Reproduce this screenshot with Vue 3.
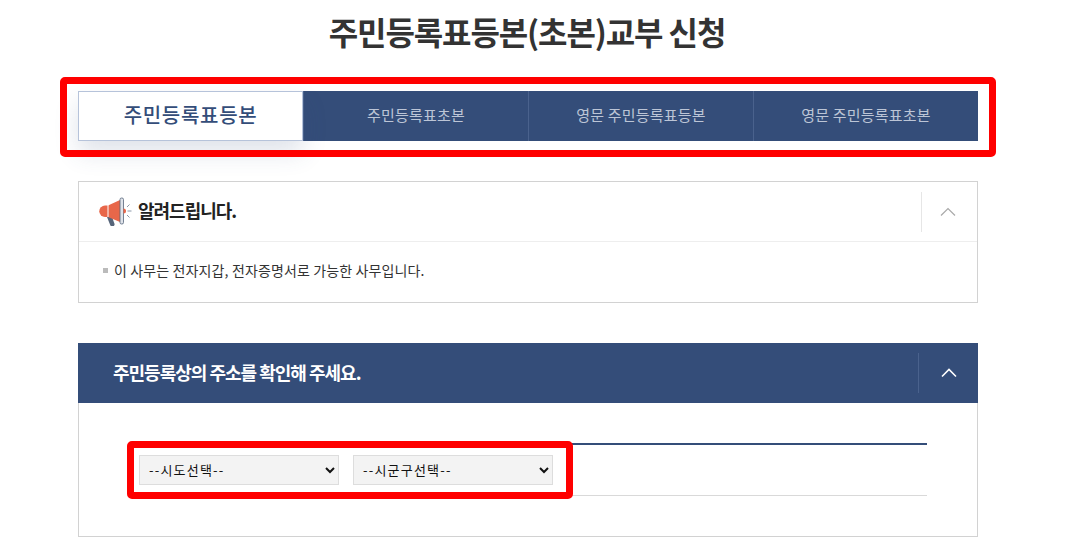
<script setup>
const tabs = ['주민등록표초본', '영문 주민등록표등본', '영문 주민등록표초본']
</script>

<template>
  <div class="page">
    <div class="wrap">
      <h1 class="title">주민등록표등본(초본)교부 신청</h1>

      <div class="tabs-zone">
        <div class="tabs">
          <div class="tab active">주민등록표등본</div>
          <div v-for="t in tabs" :key="t" class="tab">{{ t }}</div>
        </div>
        <div class="mark mark-tabs"></div>
      </div>

      <section class="notice">
        <header class="notice-head">
          <svg class="horn" width="36" height="30" viewBox="0 0 36 30">
            <path d="M10 21l5 0 2.400 6.500a2.200 2.200 0 0 1-4.200 1.500z" fill="#56657a"/>
            <path d="M8 9.500h3v11.500H8a5.700 5.700 0 0 1 0-11.500z" fill="#e8674a"/>
            <path d="M11 9.500l12-5.500v22l-12-5z" fill="#e8674a"/>
            <path d="M11 9v12" stroke="#fff" stroke-width="1"/>
            <rect x="23" y="2" width="3.500" height="26" rx="1.500" fill="#dfe3ea" stroke="#56657a" stroke-width=".8"/>
            <path d="M26.500 12.500a2.500 2.500 0 0 1 0 5z" fill="#e8674a"/>
            <path d="M30.500 15h4M30 11l2.500-2.500M30 19l2.500 2.500" stroke="#8a97a8" stroke-width="1"/>
          </svg>
          <strong class="notice-title">알려드립니다.</strong>
          <div class="toggle">
            <svg width="16" height="10" viewBox="0 0 16 10"><path d="M1 8.500l7-7 7 7" fill="none" stroke="#a9a9a9" stroke-width="1.200"/></svg>
          </div>
        </header>
        <div class="notice-body">
          <span class="bullet"></span>
          <span>이 사무는 전자지갑, 전자증명서로 가능한 사무입니다.</span>
        </div>
      </section>

      <section class="address">
        <header class="address-head">
          <strong class="address-title">주민등록상의 주소를 확인해 주세요.</strong>
          <div class="toggle toggle-dark">
            <svg width="16" height="10" viewBox="0 0 16 10"><path d="M1 8.500l7-7 7 7" fill="none" stroke="#fff" stroke-width="1.600"/></svg>
          </div>
        </header>
        <div class="address-body">
          <div class="field-row">
            <select class="sel"><option>--시도선택--</option></select>
            <select class="sel"><option>--시군구선택--</option></select>
            <div class="mark mark-select"></div>
          </div>
        </div>
      </section>
    </div>
  </div>
</template>

<style scoped>
.page {
  width: 1056px;
  font-family: "Noto Sans CJK KR", "Noto Sans", sans-serif;
  color: #333;
}
.wrap {
  width: 900px;
  margin: 0 auto;
}
.title {
  margin: 0;
  height: 91px;
  padding: 8px 2px 0 0;
  box-sizing: border-box;
  text-align: center;
  font-size: 32px;
  line-height: 46px;
  font-weight: 700;
  letter-spacing: -1.1px;
  color: #333;
}
.tabs-zone {
  position: relative;
}
.tabs {
  display: flex;
  height: 50px;
}
.tab {
  flex: 0 0 225px;
  display: flex;
  align-items: center;
  justify-content: center;
  box-sizing: border-box;
  padding-bottom: 4px;
  background: #344d79;
  color: #bcc5d6;
  font-size: 15px;
  letter-spacing: .2px;
  border-left: 1px solid #4a628d;
}
.tab.active {
  background: #fff;
  color: #344d79;
  font-size: 20px;
  font-weight: 500;
  letter-spacing: .7px;
  border: 1px solid #b6c3da;
  box-shadow: 0 12px 24px rgba(53, 78, 122, .16);
  position: relative;
}
.mark {
  position: absolute;
  box-sizing: border-box;
  border: 7px solid #f00;
  border-radius: 5px;
  pointer-events: none;
}
.mark-tabs {
  left: -18px;
  top: -14px;
  width: 936px;
  height: 80px;
  z-index: 2;
}
.notice {
  margin-top: 40px;
  height: 122px;
  box-sizing: border-box;
  border: 1px solid #d2d2d2;
  background: #fff;
  position: relative;
}
.notice-head {
  height: 60px;
  display: flex;
  align-items: center;
  border-bottom: 1px solid #eee;
  padding-left: 19px;
  box-sizing: border-box;
}
.horn {
  flex: none;
  margin-left: -1px;
  margin-top: -1px;
}
.notice-title {
  margin-left: 5px;
  margin-bottom: 3px;
  font-size: 18px;
  font-weight: 700;
  letter-spacing: -1px;
  color: #222;
}
.toggle {
  margin-left: auto;
  width: 56px;
  height: 40px;
  padding-right: 4px;
  border-left: 1px solid #e6e6e6;
  display: flex;
  align-items: center;
  justify-content: center;
  box-sizing: border-box;
}
.notice-body {
  display: flex;
  align-items: center;
  height: 60px;
  padding: 0 0 4px 24px;
  box-sizing: border-box;
  font-size: 14px;
  letter-spacing: .13px;
  color: #333;
}
.bullet {
  width: 5px;
  height: 5px;
  background: #bbb;
  margin-right: 6px;
}
.address {
  margin-top: 40px;
}
.address-head {
  height: 60px;
  background: #344d79;
  display: flex;
  align-items: center;
  padding-left: 35px;
}
.address-title {
  color: #fff;
  font-size: 18px;
  font-weight: 700;
  letter-spacing: -1px;
  margin-bottom: 3px;
}
.toggle-dark {
  width: 60px;
  padding-right: 0;
  border-left-color: #4a628d;
}
.address-body {
  height: 134px;
  box-sizing: border-box;
  border: 1px solid #d2d2d2;
  border-top: 0;
  padding: 40px 50px 0;
}
.field-row {
  position: relative;
  height: 53px;
  box-sizing: border-box;
  border-top: 2px solid #344d79;
  border-bottom: 1px solid #d9d9d9;
  padding: 10px 10px 0;
  display: flex;
  gap: 14px;
}
.sel {
  width: 200px;
  height: 30px;
  box-sizing: border-box;
  background: #f3f3f3;
  border: 1px solid #ddd;
  border-radius: 0;
  font-family: "Noto Sans CJK KR", sans-serif;
  font-size: 13px;
  letter-spacing: 1.2px;
  padding: 0 0 2px 5px;
  color: #111;
}
.mark-select {
  left: -2px;
  top: -4px;
  width: 446px;
  height: 58px;
}
</style>

<style>
html, body { overflow: hidden; background: #fff; }
</style>
